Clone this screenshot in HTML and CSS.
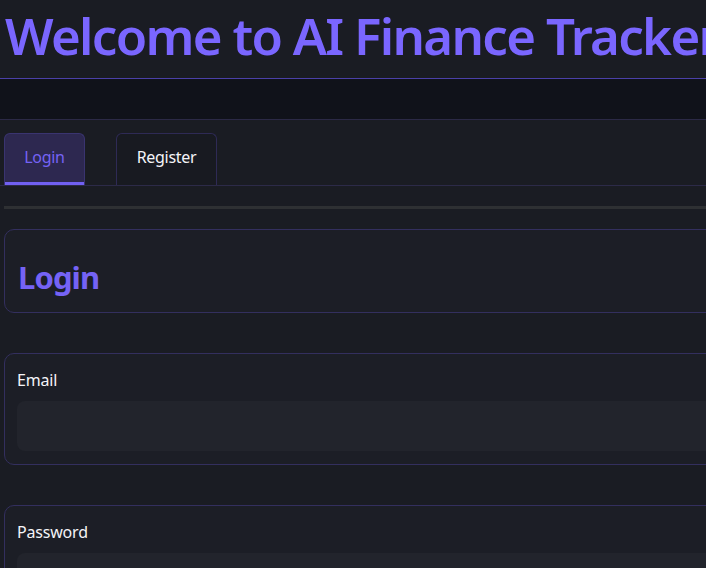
FILE: index.html
```html
<!DOCTYPE html>
<html>
<head>
<meta charset="utf-8">
<link rel="stylesheet" href="styles.css">
</head>
<body>
<div class="page">
  <header class="header">
    <h1 class="title">Welcome to AI Finance Tracker</h1>
  </header>
  <div class="band"></div>
  <nav class="tabs">
    <div class="tab tab-active">Login</div>
    <div class="tab">Register</div>
  </nav>
  <div class="spacer"><div class="bar"></div></div>
  <section class="card card-heading">
    <h2 class="heading">Login</h2>
  </section>
  <section class="card card-field">
    <label class="label">Email</label>
    <div class="input"></div>
  </section>
  <section class="card card-field">
    <label class="label">Password</label>
    <div class="input"></div>
  </section>
</div>
</body>
</html>
```
FILE: styles.css
```css
html, body {
  margin: 0;
  padding: 0;
  background: #1a1c23;
  overflow: hidden;
}
body {
  font-family: "Noto Sans", "Open Sans", sans-serif;
  color: #f2f2f5;
}
.page {
  width: 820px;
  height: 568px;
}
.header {
  height: 78px;
  border-bottom: 1px solid #4b40a8;
  display: flex;
  align-items: flex-start;
}
.title {
  margin: 0;
  padding: 2px 0 0 5px;
  font-size: 51px;
  line-height: 66px;
  font-weight: 600;
  color: #7a66ff;
  white-space: nowrap;
  letter-spacing: -1.7px;
}
.band {
  height: 40px;
  background: #10121a;
  border-bottom: 1px solid #2b2946;
}
.tabs {
  display: flex;
  gap: 31px;
  padding: 13px 0 0 4px;
  border-bottom: 1px solid #2c2a48;
  height: 52px;
  box-sizing: content-box;
}
.tab {
  box-sizing: border-box;
  height: 52px;
  padding: 0 0 5px;
  display: flex;
  align-items: center;
  justify-content: center;
  border: 1px solid #2e2a55;
  border-bottom: none;
  border-radius: 6px 6px 0 0;
  font-size: 16px;
  letter-spacing: -0.3px;
  color: #f4f4f8;
  background: #181a21;
}
.tab-active {
  background: #2d2850;
  color: #7563f5;
  border-color: #3a3470;
  box-shadow: inset 0 -3px 0 #7160f2;
  width: 81px;
}
.tab:not(.tab-active) {
  width: 101px;
}
.spacer {
  padding: 20px 0 20px 4px;
}
.bar {
  height: 3px;
  background: #2e3033;
}
.card {
  margin-left: 4px;
  border: 1px solid #332f5e;
  border-radius: 10px;
  background: #1c1e26;
  box-sizing: border-box;
}
.card-heading {
  height: 84px;
  display: flex;
  align-items: center;
  padding: 12px 13px 0;
  margin-bottom: 40px;
}
.heading {
  margin: 0;
  font-size: 31px;
  font-weight: 700;
  color: #7563f5;
  letter-spacing: -0.9px;
}
.card-field {
  height: 112px;
  padding: 12px 12px 0;
  margin-bottom: 40px;
}
.label {
  display: block;
  font-size: 16px;
  line-height: 28px;
  letter-spacing: -0.2px;
  color: #f4f4f8;
  margin-bottom: 7px;
}
.input {
  height: 50px;
  border-radius: 8px;
  background: #22242c;
}
```
